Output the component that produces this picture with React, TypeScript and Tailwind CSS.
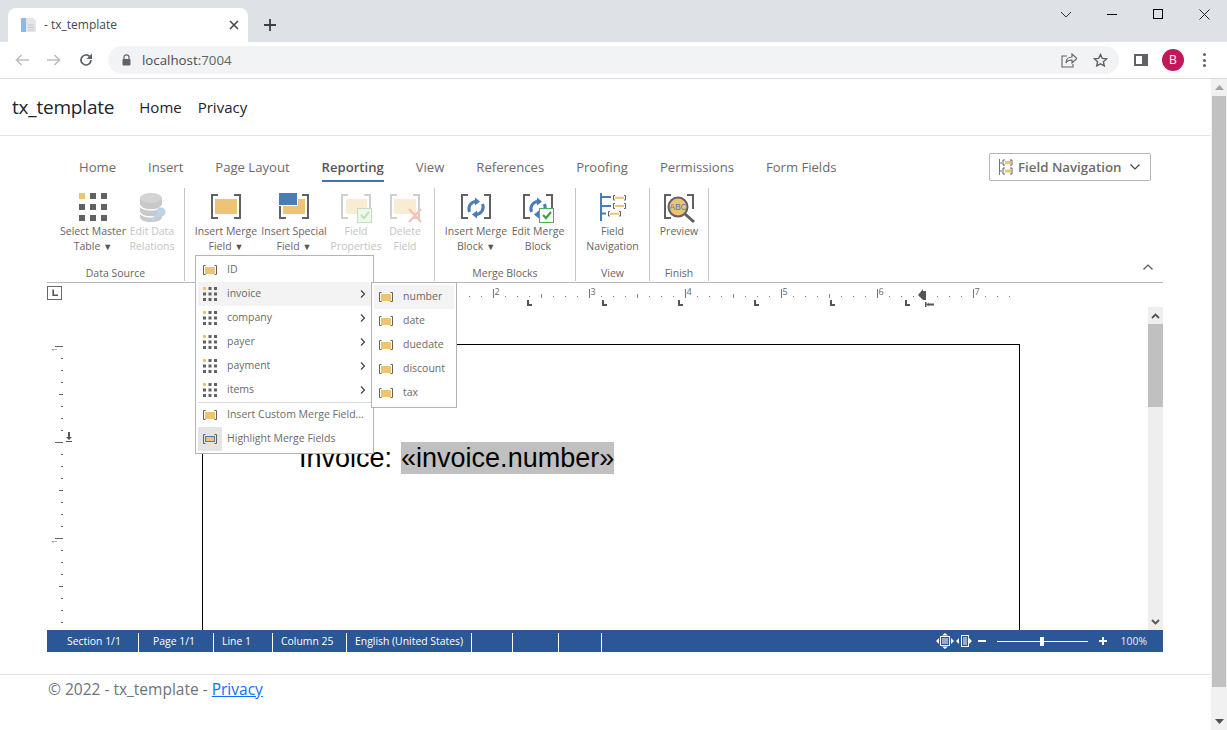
import React from "react";

const GOLD = "#ecc473";
const DARK = "#616161";
const BLUE = "#4a7db5";

function Grid({ size = 14 }: { size?: number }) {
  const cells = [0, 1, 2].flatMap((r) => [0, 1, 2].map((c) => [c, r]));
  return (
    <svg width={size} height={size} viewBox="0 0 28 28" className="shrink-0">
      {cells.map(([c, r]) => (
        <rect key={`${c}${r}`} x={c * 11} y={r * 11} width="6" height="6" fill={c + r === 0 ? GOLD : DARK} />
      ))}
    </svg>
  );
}

function Brackets({ color = DARK, x0 = 3, x1 = 31, y0 = 3, y1 = 26, w = 2 }: { color?: string; x0?: number; x1?: number; y0?: number; y1?: number; w?: number }) {
  return (
    <g fill="none" stroke={color} strokeWidth={w}>
      <path d={`M${x0 + 6} ${y0}H${x0}V${y1}H${x0 + 6}`} />
      <path d={`M${x1 - 6} ${y0}H${x1}V${y1}H${x1 - 6}`} />
    </g>
  );
}

function MergeSmall({ highlight = false }: { highlight?: boolean }) {
  return (
    <svg width="16" height="12" viewBox="0 0 16 12" className="shrink-0">
      <path d="M3.500 1.500H1.500V10.500H3.500M12.500 1.500H14.500V10.500H12.500" fill="none" stroke={DARK} strokeWidth="1" />
      <rect x={highlight ? 3.5 : 3} y={highlight ? 3.5 : 3} width={highlight ? 9 : 10} height={highlight ? 5 : 7} fill={GOLD} stroke={highlight ? BLUE : "none"} />
    </svg>
  );
}

function MergeField() {
  return (
    <svg width="34" height="30" viewBox="0 0 34 30">
      <Brackets />
      <rect x="6" y="7" width="22" height="15" fill={GOLD} />
    </svg>
  );
}

function SpecialField() {
  return (
    <svg width="34" height="30" viewBox="0 0 34 30">
      <Brackets />
      <rect x="6" y="7" width="22" height="15" fill={GOLD} />
      <rect x="1.500" y="0.500" width="19" height="13" fill={BLUE} stroke="#fff" strokeWidth="1" />
    </svg>
  );
}

function FieldProps() {
  return (
    <svg width="34" height="32" viewBox="0 0 34 32">
      <Brackets color="#cfcfcf" />
      <rect x="7" y="7" width="21" height="15" fill="#f9ecd5" />
      <rect x="18.500" y="16.500" width="14" height="14" fill="#eef8ec" stroke="#bfe0ba" />
      <path d="M22 23l3 3 5-6" fill="none" stroke="#bfe0ba" strokeWidth="2" />
    </svg>
  );
}

function DeleteField() {
  return (
    <svg width="34" height="32" viewBox="0 0 34 32">
      <Brackets color="#cfcfcf" />
      <rect x="6" y="7" width="22" height="15" fill="#f9ecd5" />
      <path d="M21 17l12 13M33 17L21 30" stroke="#f2c4bb" strokeWidth="2.400" />
    </svg>
  );
}

function Cycle() {
  return (
    <g>
      <path d="M10.500 20A7.500 7.500 0 0 1 17 9.500" fill="none" stroke={BLUE} strokeWidth="3" />
      <path d="M16 5.500l5 4-5 4z" fill={BLUE} />
      <path d="M23.500 12A7.500 7.500 0 0 1 17 22.500" fill="none" stroke={BLUE} strokeWidth="3" />
      <path d="M18 18.500l-5 4 5 4z" fill={BLUE} />
    </g>
  );
}

function MergeBlock() {
  return (
    <svg width="34" height="30" viewBox="0 0 34 30">
      <Brackets />
      <Cycle />
    </svg>
  );
}

function EditBlock() {
  return (
    <svg width="34" height="32" viewBox="0 0 34 32">
      <Brackets />
      <Cycle />
      <rect x="18.500" y="16.500" width="14" height="14" fill="#fff" stroke="#4caf50" />
      <path d="M22 23l3 3 5-6" fill="none" stroke="#3aa640" strokeWidth="2.200" />
    </svg>
  );
}

function FieldNavBig() {
  return (
    <svg width="28" height="30" viewBox="0 0 28 30">
      <path d="M2 1V29" stroke={BLUE} strokeWidth="2" />
      <path d="M2 5H12M2 14H12M2 21.500H7" stroke={BLUE} strokeWidth="2" />
      <g fill="none" stroke={DARK} strokeWidth="1">
        <path d="M16 3.500h-1.500v4.500h1.500M25 3.500h1.500v4.500h-1.500M16 11.500h-1.500v5h1.500M25 11.500h1.500v5h-1.500M11 19.500h-1.500v4.500h1.500M20 19.500h1.500v4.500h-1.500" />
      </g>
      <path d="M16 5.800h9M16 14h9M11 21.800h9" stroke={GOLD} strokeWidth="2" />
    </svg>
  );
}

function Preview() {
  return (
    <svg width="34" height="34" viewBox="0 0 34 34">
      <path d="M9 3H3V26H9M25 3H31V17" fill="none" stroke={DARK} strokeWidth="2" />
      <circle cx="16" cy="15" r="9.500" fill={GOLD} stroke={DARK} strokeWidth="2" />
      <path d="M23 22l9 8" stroke={DARK} strokeWidth="3" />
      <text x="16" y="18" textAnchor="middle" fontSize="8.500" fill={BLUE} fontFamily="Liberation Sans, sans-serif">ABC</text>
    </svg>
  );
}

function Database() {
  return (
    <svg width="30" height="32" viewBox="0 0 30 32">
      <path d="M3 6v19c0 3 5 5 11 5s11-2 11-5V6z" fill="#c9c9c9" />
      <ellipse cx="14" cy="6" rx="11" ry="5" fill="#d4d4d4" />
      <path d="M3 13c0 3 5 5 11 5s11-2 11-5M3 20c0 3 5 5 11 5s11-2 11-5" fill="none" stroke="#fff" strokeWidth="1.600" />
      <circle cx="24" cy="20" r="4.500" fill="#bcd3ea" />
      <path d="M21 23l-7 6" stroke="#bcd3ea" strokeWidth="3" />
    </svg>
  );
}

function RibbonButton({ icon, lines, w, disabled, caret }: { icon: React.ReactNode; lines: string[]; w: string; disabled?: boolean; caret?: boolean }) {
  return (
    <div className={`${w} flex flex-col items-center text-[10.500px] leading-[15px] ${disabled ? "text-[#c4c4c4]" : "text-[#666]"}`}>
      <div className="h-[36px] flex items-start justify-center pt-[4px]">{icon}</div>
      {lines.map((l, i) => (
        <div key={l} className="whitespace-nowrap">
          {l}
          {caret && i === lines.length - 1 ? <span className="text-[9px] text-[#555] ml-[3px]">▼</span> : null}
        </div>
      ))}
    </div>
  );
}

function Group({ label, w, pl, children }: { label: string; w: string; pl: string; children: React.ReactNode }) {
  return (
    <div className={`${w} h-[93px] flex flex-col justify-between border-r border-[#c6c6c6]`}>
      <div className={`flex ${pl}`}>{children}</div>
      <div className="text-[10.500px] leading-[14px] text-center text-[#666] pb-[1px]">{label}</div>
    </div>
  );
}

function MenuRow({ icon, label, hover, arrow, iconBg }: { icon: React.ReactNode; label: string; hover?: boolean; arrow?: boolean; iconBg?: boolean }) {
  return (
    <div className={`h-[24px] flex items-center text-[10.500px] text-[#6b6b6b] ${hover ? "bg-[#f3f3f3]" : ""}`}>
      <div className={`w-[24px] h-[24px] flex items-center justify-center shrink-0 ${iconBg ? "bg-[#e4e4e4]" : ""}`}>{icon}</div>
      <div className="ml-[5px] flex-1 whitespace-nowrap">{label}</div>
      {arrow ? (
        <svg width="6" height="8" viewBox="0 0 6 8" className="mr-[5px]">
          <path d="M1 0.500L4.500 4L1 7.500" fill="none" stroke="#444" strokeWidth="1.200" />
        </svg>
      ) : null}
    </div>
  );
}

function HRuler() {
  const dots: number[] = [];
  for (let x = 469; x < 1012; x += 12) dots.push(x);
  const bars = [493, 589, 685, 781, 877, 973];
  const halves = [541, 637, 733, 829, 925];
  const tabs = [527, 602, 678, 754, 830, 905];
  return (
    <svg width="1116" height="24" viewBox="47 283 1116 24" className="block">
      <rect x="47.500" y="286.500" width="14" height="13" fill="#fff" stroke="#666" />
      <path d="M54 289.500v5h4v1.600h-5.600v-6.600z" fill="#555" />
      {dots.map((x) =>
        bars.includes(x) || halves.includes(x) ? null : <rect key={x} x={x} y="296" width="1" height="1" fill="#777" />
      )}
      {halves.map((x) => (
        <rect key={x} x={x} y="294" width="1" height="4" fill="#888" />
      ))}
      {bars.map((x, i) => (
        <g key={x}>
          <rect x={x} y="289" width="1" height="9" fill="#777" />
          <text x={x + 1.500} y="295" fontSize="9" fill="#666" fontFamily="Open Sans, sans-serif">{i + 2}</text>
        </g>
      ))}
      {tabs.map((x) => (
        <path key={x} d={`M${x} 300h2v4h3v2h-5z`} fill="#555" />
      ))}
      <path d="M918 295l5-6v2h3v9h-3z" fill="#555" />
      <path d="M925 302h1.500v5h-1.500zM928 303.500h6v2h-6zM928.500 306.500l-2-2 2-2z" fill="#555" />
    </svg>
  );
}

function VRuler() {
  const ticks: React.ReactNode[] = [];
  for (let i = 0; i < 24; i++) {
    const y = 346 + i * 12;
    const kind = i % 8 === 0 ? 8 : i % 4 === 0 ? 4 : 2;
    ticks.push(<rect key={y} x={63 - kind} y={y} width={kind} height="1" fill="#666" />);
  }
  return (
    <svg width="155" height="323" viewBox="47 307 155 323" className="block shrink-0">
      {ticks}
      <text x="0" y="0" fontSize="8" fill="#777" fontFamily="Open Sans, sans-serif" transform="translate(57 352) rotate(-90)">1</text>
      <text x="0" y="0" fontSize="8" fill="#777" fontFamily="Open Sans, sans-serif" transform="translate(57 544) rotate(-90)">1</text>
      <path d="M68 432h2v5h2l-3 3-3-3h2z" fill="#555" />
      <rect x="66" y="441" width="6" height="1" fill="#555" />
    </svg>
  );
}

function StatusCell({ w, pl, children }: { w: string; pl?: string; children?: React.ReactNode }) {
  return (
    <div className={`${w} ${pl ?? ""} h-[19px] mt-[3px] pb-[2px] border-r border-white flex items-center whitespace-nowrap`}>{children}</div>
  );
}

const navTabs = ["Home", "Insert", "Page Layout", "Reporting", "View", "References", "Proofing", "Permissions", "Form Fields"];

export default function App() {
  return (
    <div className="w-[1227px] h-[730px] overflow-hidden flex flex-col bg-white font-['Open_Sans','Noto_Sans',sans-serif]">
      {/* browser tab strip */}
      <div className="h-[42px] bg-[#dee1e6] flex shrink-0">
        <div className="w-[240px] h-[34px] mt-[8px] ml-[8px] bg-white rounded-t-[8px] flex items-center pl-[13px] pr-[9px]">
          <svg width="15" height="16" viewBox="0 0 15 16" className="shrink-0">
            <rect x="0" y="1" width="5" height="14" fill="#8db9e2" />
            <path d="M5 1h7l3 3v11H5z" fill="#e4e6ea" />
            <path d="M7 8h6M7 10.500h6M7 13h6" stroke="#c3c7cd" />
          </svg>
          <div className="ml-[8px] flex-1 text-[12px] text-[#45494d]">- tx_template</div>
          <svg width="10" height="10" viewBox="0 0 10 10"><path d="M1 1l8 8M9 1l-8 8" stroke="#45494d" strokeWidth="1.600" /></svg>
        </div>
        <svg width="12" height="12" viewBox="0 0 12 12" className="ml-[16px] mt-[19px]"><path d="M6 0v12M0 6h12" stroke="#3c4043" strokeWidth="1.800" /></svg>
        <div className="flex-1" />
        <div className="flex items-start">
          <div className="w-[46px] h-[28px] flex items-center justify-center">
            <svg width="12" height="7" viewBox="0 0 12 7"><path d="M1 1l5 5 5-5" fill="none" stroke="#333" /></svg>
          </div>
          <div className="w-[46px] h-[28px] flex items-center justify-center"><div className="w-[10px] h-[1px] bg-black" /></div>
          <div className="w-[46px] h-[28px] flex items-center justify-center"><div className="w-[10px] h-[10px] border border-black" /></div>
          <div className="w-[46px] h-[28px] flex items-center justify-center">
            <svg width="11" height="11" viewBox="0 0 11 11"><path d="M0.500 0.500l10 10M10.500 0.500l-10 10" stroke="#222" /></svg>
          </div>
        </div>
      </div>

      {/* browser toolbar */}
      <div className="h-[37px] bg-white border-b border-[#dadce0] flex items-start shrink-0">
        <div className="flex items-center h-[36px] pl-[15px]">
          <svg width="14" height="12" viewBox="0 0 14 12"><path d="M14 6H1.500M6.500 1l-5 5 5 5" fill="none" stroke="#bdbfc2" strokeWidth="1.700" /></svg>
          <svg width="14" height="12" viewBox="0 0 14 12" className="ml-[18px]"><path d="M0 6h12.500M7.500 1l5 5-5 5" fill="none" stroke="#bdbfc2" strokeWidth="1.700" /></svg>
          <svg width="14" height="14" viewBox="0 0 14 14" className="ml-[18px]"><path d="M12 7a5 5 0 1 1-1.500-3.600" fill="none" stroke="#5f6368" strokeWidth="1.700" /><path d="M13 0.500v5.500H7.500z" fill="#5f6368" /></svg>
        </div>
        <div className="ml-[15px] mt-[4px] w-[1011px] h-[28px] rounded-[14px] bg-[#f1f3f4] flex items-center pl-[14px] pr-[11px]">
          <svg width="9" height="12" viewBox="0 0 9 12" className="shrink-0"><path d="M2 5V3.300a2.500 2.500 0 0 1 5 0V5" fill="none" stroke="#5f6368" strokeWidth="1.200" /><rect x="0.500" y="5" width="8" height="6.500" rx="1" fill="#5f6368" /></svg>
          <div className="ml-[11px] flex-1 pt-[1px] text-[13.300px] text-[#4a4d51]">localhost<span className="text-[#5f6368]">:7004</span></div>
          <svg width="16" height="15" viewBox="0 0 16 15"><path d="M6 3H1v11h11v-3M5 10c0-4 3-6 6-6V1l5 4.500-5 4.500V7c-3 0-5 1-6 3z" fill="none" stroke="#5f6368" strokeWidth="1.100" /></svg>
          <svg width="15" height="14" viewBox="0 0 15 14" className="ml-[16px]"><path d="M7.500 1.500l1.800 3.900 4.200.5-3.100 2.800.9 4.200-3.800-2.100-3.800 2.100.9-4.200L1.500 5.900l4.200-.5z" fill="none" stroke="#5f6368" strokeWidth="1.400" /></svg>
        </div>
        <div className="flex items-center h-[36px] pl-[15px]">
          <div className="w-[14px] h-[12px] border-[2px] border-[#5f6368] border-r-[6px]" />
          <div className="ml-[14px] w-[22px] h-[22px] rounded-full bg-[#c2185b] text-white text-[12px] flex items-center justify-center">B</div>
          <div className="ml-[19px] flex flex-col gap-[2.500px]">
            <div className="w-[3px] h-[3px] rounded-full bg-[#5f6368]" />
            <div className="w-[3px] h-[3px] rounded-full bg-[#5f6368]" />
            <div className="w-[3px] h-[3px] rounded-full bg-[#5f6368]" />
          </div>
        </div>
      </div>

      <div className="flex flex-1 min-h-0">
        <div className="flex-1 min-w-0 relative">
          {/* navbar */}
          <div className="h-[57px] border-b border-[#e3e3e3] flex items-center pl-[12px] text-[#212529]">
            <div className="text-[19px] tracking-[-0.2px] mr-[25px]">tx_template</div>
            <div className="text-[15px] mr-[16px]">Home</div>
            <div className="text-[15px]">Privacy</div>
          </div>

          <div className="pl-[47px] pr-[48px] pt-[17px]">
            {/* ribbon tabs */}
            <div className="h-[29px] flex items-start justify-between">
              <div className="flex gap-[32px] pl-[32px] pt-[5px] text-[13.100px] leading-[19px] text-[#6b6b6b]">
                {navTabs.map((t) => (
                  <div key={t} className={t === "Reporting" ? "font-semibold text-[#555] border-b-[2px] border-[#3f73ab] h-[24px]" : ""}>{t}</div>
                ))}
              </div>
              <div className="mr-[12px] w-[162px] h-[28px] border border-[#b5b5b5] rounded-[2px] flex items-center pl-[9px] text-[13.300px] font-semibold text-[#6b6b6b]">
                <svg width="15" height="16" viewBox="0 0 15 16" className="shrink-0">
                  <path d="M0.500 0v16M0.500 4H3M0.500 12H3" stroke={BLUE} />
                  <path d="M6 1H4v5h2M11 1h2v5h-2M6 9H4v6h2M11 9h2v6h-2" fill="none" stroke={DARK} />
                  <path d="M6 3.500h6M6 12h6" stroke={GOLD} strokeWidth="3" />
                </svg>
                <span className="ml-[4px] pt-[1px] flex-1 whitespace-nowrap">Field Navigation</span>
                <svg width="10" height="6" viewBox="0 0 10 6" className="mr-[10px]"><path d="M0.500 0.500L5 5l4.500-4.500" fill="none" stroke="#444" strokeWidth="1.200" /></svg>
              </div>
            </div>

            {/* ribbon */}
            <div className="pt-[6px] h-[101px] flex border-b border-[#b9b9b9] relative">
              <Group label="Data Source" w="w-[138px]" pl="pl-[13px]">
                <RibbonButton w="w-[66px]" icon={<div className="mt-[1px]"><Grid size={28} /></div>} lines={["Select Master", "Table"]} caret />
                <RibbonButton w="w-[52px]" icon={<Database />} lines={["Edit Data", "Relations"]} disabled />
              </Group>
              <Group label="" w="w-[250px]" pl="pl-[7px]">
                <RibbonButton w="w-[68px]" icon={<MergeField />} lines={["Insert Merge", "Field"]} caret />
                <RibbonButton w="w-[68px]" icon={<SpecialField />} lines={["Insert Special", "Field"]} caret />
                <RibbonButton w="w-[56px]" icon={<FieldProps />} lines={["Field", "Properties"]} disabled />
                <RibbonButton w="w-[42px]" icon={<DeleteField />} lines={["Delete", "Field"]} disabled />
              </Group>
              <Group label="Merge Blocks" w="w-[141px]" pl="pl-[8px]">
                <RibbonButton w="w-[66px]" icon={<MergeBlock />} lines={["Insert Merge", "Block"]} caret />
                <RibbonButton w="w-[58px]" icon={<EditBlock />} lines={["Edit Merge", "Block"]} />
              </Group>
              <Group label="View" w="w-[74px]" pl="pl-0">
                <RibbonButton w="w-[73px]" icon={<FieldNavBig />} lines={["Field", "Navigation"]} />
              </Group>
              <Group label="Finish" w="w-[59px]" pl="pl-0">
                <RibbonButton w="w-[58px]" icon={<Preview />} lines={["Preview"]} />
              </Group>
              <svg width="10" height="6" viewBox="0 0 10 6" className="absolute right-[10px] top-[82px]"><path d="M0.500 5.500L5 1l4.500 4.500" fill="none" stroke="#555" strokeWidth="1.200" /></svg>
            </div>

            {/* editor */}
            <div className="h-[347px] flex flex-col overflow-hidden">
              <HRuler />
              <div className="flex flex-1 min-h-0">
                <VRuler />
                <div className="w-[818px] mt-[37px] h-[400px] border border-black bg-white pl-[96px] pt-[98px] text-[27px] leading-[31px] text-black font-['Liberation_Sans',sans-serif] shrink-0">
                  Invoice:&nbsp; <span className="bg-[#c0c0c0] -ml-[6px] py-[1px]">«invoice.number»</span>
                </div>
                <div className="flex-1" />
                <div className="w-[15px] bg-[#eeeeee] flex flex-col items-center shrink-0">
                  <div className="h-[17px] flex items-center justify-center">
                    <svg width="9" height="6" viewBox="0 0 9 6"><path d="M1 5l3.500-3.500L8 5" fill="none" stroke="#555" strokeWidth="1.800" /></svg>
                  </div>
                  <div className="w-full h-[83px] bg-[#c0c0c0]" />
                  <div className="flex-1" />
                  <div className="h-[17px] flex items-center justify-center">
                    <svg width="9" height="6" viewBox="0 0 9 6"><path d="M1 1l3.500 3.500L8 1" fill="none" stroke="#555" strokeWidth="1.800" /></svg>
                  </div>
                </div>
              </div>
            </div>

            {/* status bar */}
            <div className="h-[22px] bg-[#2b5797] flex text-[10.400px] text-white items-start pl-[1px]">
              <StatusCell w="w-[91px]" pl="pl-[19px]">Section 1/1</StatusCell>
              <StatusCell w="w-[75px]" pl="pl-[14px]">Page 1/1</StatusCell>
              <StatusCell w="w-[59px]" pl="pl-[8px]">Line 1</StatusCell>
              <StatusCell w="w-[74px]" pl="pl-[8px]">Column 25</StatusCell>
              <StatusCell w="w-[125px]" pl="pl-[8px]">English (United States)</StatusCell>
              <StatusCell w="w-[41px]" />
              <StatusCell w="w-[46px]" />
              <StatusCell w="w-[43px]" />
              <div className="flex-1" />
              <div className="h-[22px] flex items-center pr-[16px]">
                <svg width="36" height="16" viewBox="0 0 36 16" fill="#fff">
                  <rect x="4.500" y="3.500" width="9" height="9" fill="none" stroke="#fff" />
                  <path d="M6 6h6M6 8h6M6 10h6" stroke="#fff" />
                  <path d="M0 8l3-3v6zM18 8l-3-3v6zM9 0l3 2.500H6zM9 16l3-2.500H6z" />
                  <rect x="25.500" y="2.500" width="7" height="11" fill="none" stroke="#fff" />
                  <path d="M27 5h4M27 7h4M27 9h4M27 11h4" stroke="#fff" />
                  <path d="M20 8l3-3v6zM36 8l-3-3v6z" />
                </svg>
                <div className="ml-[6px] w-[8px] h-[2px] bg-white" />
                <div className="ml-[11px] w-[91px] h-[1px] bg-white relative">
                  <div className="absolute left-[43px] -top-[4px] w-[4px] h-[9px] bg-white" />
                </div>
                <svg width="8" height="8" viewBox="0 0 8 8" className="ml-[11px]"><path d="M4 0v8M0 4h8" stroke="#fff" strokeWidth="2" /></svg>
                <div className="ml-[14px] pt-[1px] text-[#e8eef6] whitespace-nowrap">100%</div>
              </div>
            </div>
          </div>

          <div className="mt-[22px] border-t border-[#e3e3e3] pl-[48px] pt-[2px] text-[15.500px] leading-[24px] text-[#6c757d]">
            © 2022 - tx_template - <a className="text-[#0d6efd] underline">Privacy</a>
          </div>

          {/* dropdown menu */}
          <div className="absolute left-[195px] top-[176px] w-[179px] h-[199px] bg-white border border-[#b4b4b4] px-[2px] pt-[2px] z-10">
            <MenuRow icon={<MergeSmall />} label="ID" />
            <MenuRow icon={<Grid size={14} />} label="invoice" hover arrow />
            <MenuRow icon={<Grid size={14} />} label="company" arrow />
            <MenuRow icon={<Grid size={14} />} label="payer" arrow />
            <MenuRow icon={<Grid size={14} />} label="payment" arrow />
            <MenuRow icon={<Grid size={14} />} label="items" arrow />
            <div className="h-[1px] bg-[#d8d8d8]" />
            <MenuRow icon={<MergeSmall />} label="Insert Custom Merge Field..." />
            <MenuRow icon={<MergeSmall highlight />} label="Highlight Merge Fields" iconBg />
          </div>

          {/* submenu */}
          <div className="absolute left-[371px] top-[203px] w-[86px] h-[126px] bg-white border border-[#b4b4b4] px-[2px] pt-[2px] z-20">
            <MenuRow icon={<MergeSmall />} label="number" hover />
            <MenuRow icon={<MergeSmall />} label="date" />
            <MenuRow icon={<MergeSmall />} label="duedate" />
            <MenuRow icon={<MergeSmall />} label="discount" />
            <MenuRow icon={<MergeSmall />} label="tax" />
          </div>
        </div>

        {/* page scrollbar */}
        <div className="w-[16px] bg-[#f1f1f1] flex flex-col items-center shrink-0">
          <div className="h-[17px] flex items-center justify-center">
            <svg width="9" height="5" viewBox="0 0 9 5"><path d="M4.500 0L9 5H0z" fill="#a3a3a3" /></svg>
          </div>
          <div className="w-[14px] h-[591px] bg-[#c1c1c1]" />
          <div className="flex-1" />
          <div className="h-[17px] flex items-center justify-center">
            <svg width="9" height="5" viewBox="0 0 9 5"><path d="M4.500 5L9 0H0z" fill="#505050" /></svg>
          </div>
        </div>
      </div>
    </div>
  );
}
